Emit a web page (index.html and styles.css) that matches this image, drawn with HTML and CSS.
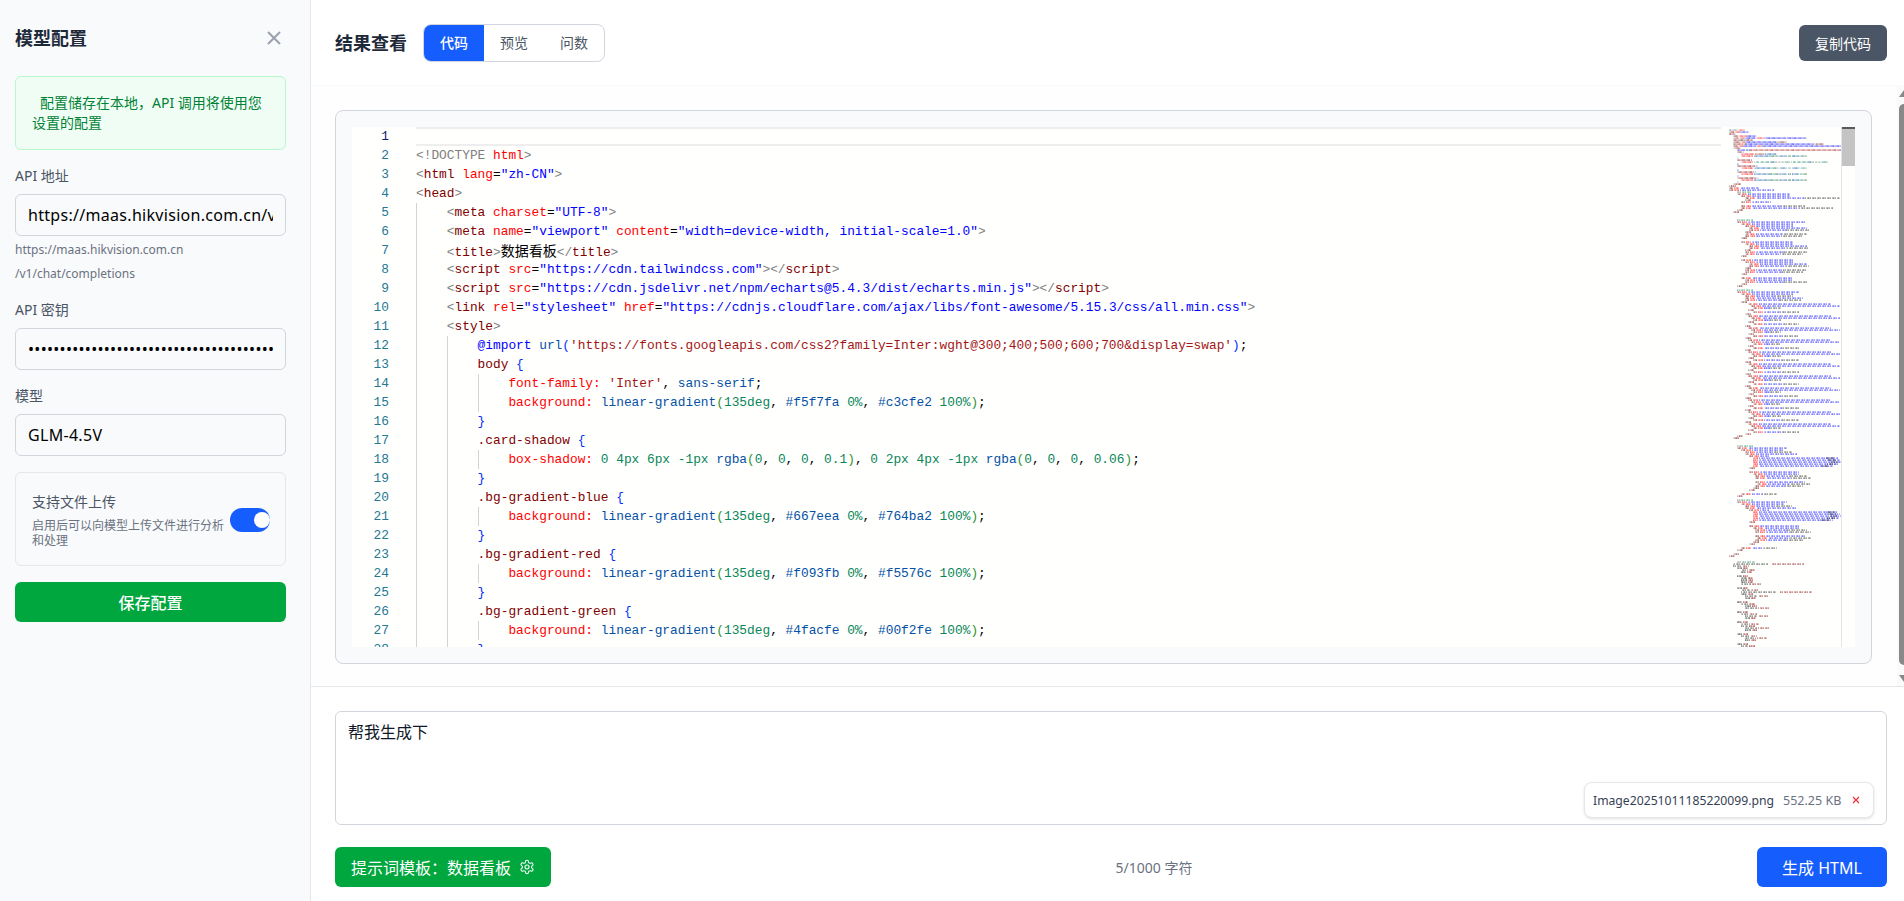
FILE: index.html
```html
<!DOCTYPE html>
<html lang="zh-CN">

<head>
    <meta charset="UTF-8">
    <meta name="viewport" content="width=device-width, initial-scale=1.0">
    <title>模型配置</title>
    <link rel="stylesheet" href="styles.css">
</head>

<body>
    <aside class="sidebar">
        <div class="sidebarHead">
            <h2 class="sidebarTitle">模型配置</h2>
            <svg class="closeIcon" viewBox="0 0 14 14" fill="none" stroke="#99a1af" stroke-width="2">
                <path d="M1 1l12 12M13 1L1 13" />
            </svg>
        </div>

        <div class="notice">配置储存在本地，API 调用将使用您设置的配置</div>

        <label class="fieldLabel">API 地址</label>
        <input class="field" type="text" value="https://maas.hikvision.com.cn/v1/chat/completions">
        <p class="hint">https://maas.hikvision.com.cn<br>/v1/chat/completions</p>

        <label class="fieldLabel fieldLabelTight">API 密钥</label>
        <input class="field" type="password" value="abcdefghijklmnopqrstuvwxyz0123456789abcd">

        <label class="fieldLabel">模型</label>
        <input class="field" type="text" value="GLM-4.5V">

        <div class="uploadCard">
            <div class="uploadText">
                <div class="uploadTitle">支持文件上传</div>
                <div class="uploadDesc">启用后可以向模型上传文件进行分析和处理</div>
            </div>
            <div class="toggle"><span class="knob"></span></div>
        </div>

        <button class="saveBtn">保存配置</button>
    </aside>

    <main class="main">
        <header class="mainHead">
            <h2 class="mainTitle">结果查看</h2>
            <div class="tabs">
                <span class="tab tabActive">代码</span>
                <span class="tab">预览</span>
                <span class="tab">问数</span>
            </div>
            <button class="copyBtn">复制代码</button>
        </header>

        <section class="result">
            <div class="codeCard">
                <div class="editor">
                    <div class="gutter">
                        <div class="num numActive">1</div>
                        <div class="num">2</div>
                        <div class="num">3</div>
                        <div class="num">4</div>
                        <div class="num">5</div>
                        <div class="num">6</div>
                        <div class="num">7</div>
                        <div class="num">8</div>
                        <div class="num">9</div>
                        <div class="num">10</div>
                        <div class="num">11</div>
                        <div class="num">12</div>
                        <div class="num">13</div>
                        <div class="num">14</div>
                        <div class="num">15</div>
                        <div class="num">16</div>
                        <div class="num">17</div>
                        <div class="num">18</div>
                        <div class="num">19</div>
                        <div class="num">20</div>
                        <div class="num">21</div>
                        <div class="num">22</div>
                        <div class="num">23</div>
                        <div class="num">24</div>
                        <div class="num">25</div>
                        <div class="num">26</div>
                        <div class="num">27</div>
                        <div class="num">28</div>
                    </div>
                    <div class="code">
                        <div class="currentLine"></div>
                        <i class="guide guideA"></i>
                        <i class="guide guideB"></i>
                        <i class="guide guideC c14"></i>
                        <i class="guide guideC c18"></i>
                        <i class="guide guideC c21"></i>
                        <i class="guide guideC c24"></i>
                        <i class="guide guideC c27"></i>
                        <div class="ln"></div>
                        <div class="ln"><span class="d">&lt;!DOCTYPE</span> <span class="a">html</span><span class="d">&gt;</span></div>
                        <div class="ln"><span class="d">&lt;</span><span class="t">html</span> <span class="a">lang</span>=<span class="v">"zh-CN"</span><span class="d">&gt;</span></div>
                        <div class="ln"><span class="d">&lt;</span><span class="t">head</span><span class="d">&gt;</span></div>
                        <div class="ln">    <span class="d">&lt;</span><span class="t">meta</span> <span class="a">charset</span>=<span class="v">"UTF-8"</span><span class="d">&gt;</span></div>
                        <div class="ln">    <span class="d">&lt;</span><span class="t">meta</span> <span class="a">name</span>=<span class="v">"viewport"</span> <span class="a">content</span>=<span class="v">"width=device-width, initial-scale=1.0"</span><span class="d">&gt;</span></div>
                        <div class="ln">    <span class="d">&lt;</span><span class="t">title</span><span class="d">&gt;</span><span class="zh">数据看板</span><span class="d">&lt;/</span><span class="t">title</span><span class="d">&gt;</span></div>
                        <div class="ln">    <span class="d">&lt;</span><span class="t">script</span> <span class="a">src</span>=<span class="v">"https://cdn.tailwindcss.com"</span><span class="d">&gt;&lt;/</span><span class="t">script</span><span class="d">&gt;</span></div>
                        <div class="ln">    <span class="d">&lt;</span><span class="t">script</span> <span class="a">src</span>=<span class="v">"https://cdn.jsdelivr.net/npm/echarts@5.4.3/dist/echarts.min.js"</span><span class="d">&gt;&lt;/</span><span class="t">script</span><span class="d">&gt;</span></div>
                        <div class="ln">    <span class="d">&lt;</span><span class="t">link</span> <span class="a">rel</span>=<span class="v">"stylesheet"</span> <span class="a">href</span>=<span class="v">"https://cdnjs.cloudflare.com/ajax/libs/font-awesome/5.15.3/css/all.min.css"</span><span class="d">&gt;</span></div>
                        <div class="ln">    <span class="d">&lt;</span><span class="t">style</span><span class="d">&gt;</span></div>
                        <div class="ln">        <span class="v">@import</span> <span class="c">url</span><span class="b1">(</span><span class="s">'https://fonts.googleapis.com/css2?family=Inter:wght@300;400;500;600;700&amp;display=swap'</span><span class="b1">)</span>;</div>
                        <div class="ln">        <span class="t">body</span> <span class="b1">{</span></div>
                        <div class="ln">            <span class="a">font-family:</span> <span class="s">'Inter'</span>, <span class="c">sans-serif</span>;</div>
                        <div class="ln">            <span class="a">background:</span> <span class="c">linear-gradient</span><span class="b2">(</span><span class="n">135deg</span>, <span class="c">#f5f7fa</span> <span class="n">0%</span>, <span class="c">#c3cfe2</span> <span class="n">100%</span><span class="b2">)</span>;</div>
                        <div class="ln">        <span class="b1">}</span></div>
                        <div class="ln">        <span class="t">.card-shadow</span> <span class="b1">{</span></div>
                        <div class="ln">            <span class="a">box-shadow:</span> <span class="n">0 4px 6px -1px</span> <span class="c">rgba</span><span class="b2">(</span><span class="n">0</span>, <span class="n">0</span>, <span class="n">0</span>, <span class="n">0.1</span><span class="b2">)</span>, <span class="n">0 2px 4px -1px</span> <span class="c">rgba</span><span class="b2">(</span><span class="n">0</span>, <span class="n">0</span>, <span class="n">0</span>, <span class="n">0.06</span><span class="b2">)</span>;</div>
                        <div class="ln">        <span class="b1">}</span></div>
                        <div class="ln">        <span class="t">.bg-gradient-blue</span> <span class="b1">{</span></div>
                        <div class="ln">            <span class="a">background:</span> <span class="c">linear-gradient</span><span class="b2">(</span><span class="n">135deg</span>, <span class="c">#667eea</span> <span class="n">0%</span>, <span class="c">#764ba2</span> <span class="n">100%</span><span class="b2">)</span>;</div>
                        <div class="ln">        <span class="b1">}</span></div>
                        <div class="ln">        <span class="t">.bg-gradient-red</span> <span class="b1">{</span></div>
                        <div class="ln">            <span class="a">background:</span> <span class="c">linear-gradient</span><span class="b2">(</span><span class="n">135deg</span>, <span class="c">#f093fb</span> <span class="n">0%</span>, <span class="c">#f5576c</span> <span class="n">100%</span><span class="b2">)</span>;</div>
                        <div class="ln">        <span class="b1">}</span></div>
                        <div class="ln">        <span class="t">.bg-gradient-green</span> <span class="b1">{</span></div>
                        <div class="ln">            <span class="a">background:</span> <span class="c">linear-gradient</span><span class="b2">(</span><span class="n">135deg</span>, <span class="c">#4facfe</span> <span class="n">0%</span>, <span class="c">#00f2fe</span> <span class="n">100%</span><span class="b2">)</span>;</div>
                        <div class="ln">        <span class="b1">}</span></div>
                    </div>
                    <canvas class="minimap" width="120" height="520"></canvas>
                    <div class="editorBar"><div class="editorThumb"></div></div>
                </div>
            </div>
            <div class="pageBar">
                <i class="pageArrow pageArrowUp"></i>
                <i class="pageThumb"></i>
                <i class="pageArrow pageArrowDown"></i>
            </div>
        </section>

        <section class="composer">
            <div class="promptWrap">
                <textarea class="prompt">帮我生成下</textarea>
                <div class="fileChip">
                    <span class="fileName">Image20251011185220099.png</span>
                    <span class="fileSize">552.25 KB</span>
                    <svg class="fileRemove" viewBox="0 0 8 8" fill="none" stroke="#fb2c36" stroke-width="1.2">
                        <path d="M1 1l6 6M7 1L1 7" />
                    </svg>
                </div>
            </div>
            <div class="actions">
                <button class="templateBtn">提示词模板：数据看板
                    <svg class="gear" viewBox="0 0 24 24" fill="none" stroke="#fff" stroke-width="1.6">
                        <path d="M12.22 2h-.44a2 2 0 0 0-2 2v.18a2 2 0 0 1-1 1.73l-.43.25a2 2 0 0 1-2 0l-.15-.08a2 2 0 0 0-2.73.73l-.22.38a2 2 0 0 0 .73 2.73l.15.1a2 2 0 0 1 1 1.72v.51a2 2 0 0 1-1 1.74l-.15.09a2 2 0 0 0-.73 2.73l.22.38a2 2 0 0 0 2.73.73l.15-.08a2 2 0 0 1 2 0l.43.25a2 2 0 0 1 1 1.73V20a2 2 0 0 0 2 2h.44a2 2 0 0 0 2-2v-.18a2 2 0 0 1 1-1.73l.43-.25a2 2 0 0 1 2 0l.15.08a2 2 0 0 0 2.73-.73l.22-.39a2 2 0 0 0-.73-2.73l-.15-.08a2 2 0 0 1-1-1.74v-.5a2 2 0 0 1 1-1.74l.15-.09a2 2 0 0 0 .73-2.73l-.22-.38a2 2 0 0 0-2.73-.73l-.15.08a2 2 0 0 1-2 0l-.43-.25a2 2 0 0 1-1-1.73V4a2 2 0 0 0-2-2z" />
                        <circle cx="12" cy="12" r="3" />
                    </svg>
                </button>
                <span class="counter">5/1000 字符</span>
                <button class="generateBtn">生成 HTML</button>
            </div>
        </section>
    </main>
    <script src="minimap.js"></script>
</body>

</html>
```
FILE: styles.css
```css
* {
    box-sizing: border-box;
}

body {
    margin: 0;
    height: 100vh;
    display: flex;
    overflow: hidden;
    background: #fff;
    color: #101828;
    font-family: "Noto Sans", "Noto Sans CJK SC", sans-serif;
}

button {
    font-family: inherit;
    border: 0;
    color: #fff;
}

/* Sidebar */
.sidebar {
    width: 311px;
    flex: none;
    padding: 26px 24px 0 15px;
    background: #f9fafb;
    border-right: 1px solid #e5e7eb;
}

.sidebarHead {
    display: flex;
    align-items: center;
    justify-content: space-between;
    height: 24px;
    margin-bottom: 26px;
    padding-right: 5px;
}

.sidebarTitle,
.mainTitle {
    margin: 0;
    font-size: 18px;
    line-height: 24px;
    font-weight: 700;
    color: #1e2939;
}

.closeIcon {
    width: 14px;
    height: 14px;
}

.notice {
    padding: 16px;
    background: #f0fdf4;
    border: 1px solid #b9f8cf;
    border-radius: 6px;
    color: #008236;
    font-size: 14px;
    line-height: 20px;
    text-indent: 8px;
}

.fieldLabel {
    display: block;
    margin: 16px 0 8px;
    color: #4a5565;
    font-size: 14px;
    line-height: 20px;
}

.fieldLabelTight {
    margin-top: 14px;
}

.field {
    display: block;
    width: 100%;
    height: 42px;
    padding: 0 12px;
    background: #f9fafb;
    border: 1px solid #d1d5dc;
    border-radius: 6px;
    color: #000;
    font-family: inherit;
    font-size: 16px;
    letter-spacing: 0.3px;
}

.hint {
    margin: 2px 0 0;
    color: #6a7282;
    font-size: 12px;
    line-height: 24px;
}

.uploadCard {
    display: flex;
    justify-content: space-between;
    align-items: center;
    height: 94px;
    margin-top: 16px;
    padding: 2px 15px 0 16px;
    border: 1px solid #e5e7eb;
    border-radius: 6px;
}

.uploadText {
    width: 195px;
}

.uploadTitle {
    color: #4a5565;
    font-size: 14px;
    line-height: 20px;
}

.uploadDesc {
    margin-top: 6px;
    color: #6a7282;
    font-size: 12px;
    line-height: 15px;
}

.toggle {
    position: relative;
    width: 40px;
    height: 24px;
    background: #155dfc;
    border-radius: 12px;
}

.knob {
    position: absolute;
    top: 4px;
    right: 0;
    width: 16px;
    height: 16px;
    background: #fff;
    border-radius: 50%;
}

.saveBtn {
    display: block;
    width: 100%;
    height: 40px;
    margin-top: 16px;
    background: #00a63e;
    border-radius: 6px;
    font-size: 16px;
    font-weight: 500;
}

/* Main column */
.main {
    flex: 1;
    min-width: 0;
    display: flex;
    flex-direction: column;
}

.mainHead {
    display: flex;
    align-items: center;
    height: 86px;
    padding: 0 17px 0 24px;
    border-bottom: 1px solid #f9fafb;
}

.tabs {
    display: flex;
    margin-left: 16px;
    height: 38px;
    border: 1px solid #d1d5dc;
    border-radius: 8px;
    overflow: hidden;
}

.tab {
    width: 60px;
    color: #4a5565;
    font-size: 14px;
    line-height: 36px;
    text-align: center;
}

.tabActive {
    background: #155dfc;
    color: #fff;
    font-weight: 500;
}

.copyBtn {
    margin-left: auto;
    width: 88px;
    height: 36px;
    background: #4a5565;
    border-radius: 6px;
    font-size: 14px;
}

.result {
    position: relative;
    height: 601px;
    padding: 24px 32px 0 24px;
    border-bottom: 1px solid #e5e7eb;
    background: #fefefe;
    overflow: hidden;
}

.codeCard {
    height: 554px;
    padding: 16px;
    background: #f9fafb;
    border: 1px solid #d1d5dc;
    border-radius: 8px;
}

.editor {
    display: flex;
    height: 520px;
    background: #fffffe;
    overflow: hidden;
    font-family: "Liberation Mono", monospace;
    font-size: 12.83px;
    line-height: 19px;
    color: #000;
}

.gutter {
    width: 64px;
    flex: none;
    padding-right: 27px;
    text-align: right;
    color: #237893;
}

.numActive {
    color: #0b216f;
}

.code {
    position: relative;
    flex: 1;
    min-width: 0;
}

.currentLine {
    position: absolute;
    top: 0;
    left: 0;
    right: 0;
    height: 19px;
    border-top: 2px solid #eeeeee;
    border-bottom: 2px solid #eeeeee;
}

.ln {
    height: 19px;
    white-space: pre;
}

.d { color: #808080; }
.t { color: #800000; }
.a { color: #ff0000; }
.v { color: #0000ff; }
.c { color: #0451a5; }
.n { color: #098658; }
.s { color: #a31515; }
.b1 { color: #0431fa; }
.b2 { color: #319331; }

.zh {
    font-family: "Noto Sans CJK SC", sans-serif;
    font-size: 14px;
}

.guide {
    position: absolute;
    width: 1px;
    background: #d3d3d3;
}

.guideA {
    left: 0;
    top: 76px;
    bottom: 0;
}

.guideB {
    left: 31px;
    top: 209px;
    bottom: 0;
}

.guideC {
    left: 62px;
    height: 19px;
}

.c14 { top: 247px; height: 38px; }
.c18 { top: 323px; }
.c21 { top: 380px; }
.c24 { top: 437px; }
.c27 { top: 494px; }

.minimap {
    width: 120px;
    height: 520px;
    flex: none;
}

.editorBar {
    width: 14px;
    flex: none;
    border-left: 1px solid #e5e5e5;
}

.editorThumb {
    height: 39px;
    background: #c4c4c4;
    border-top: 2px solid #5a5a5a;
}

/* Page scrollbar, it sits over the right edge of the result area */
.pageBar {
    position: absolute;
    top: 0;
    right: 0;
    bottom: 0;
    width: 7px;
    background: #fafafa;
    overflow: hidden;
}

.pageThumb {
    position: absolute;
    left: 2px;
    top: 18px;
    width: 10px;
    height: 561px;
    background: #888;
    border-radius: 5px;
}

.pageArrow {
    position: absolute;
    left: 2px;
    width: 5px;
    height: 7px;
    background: #888;
}

.pageArrowUp {
    top: 4px;
    clip-path: polygon(0 100%, 100% 0, 100% 100%);
}

.pageArrowDown {
    top: 589px;
    clip-path: polygon(0 0, 100% 0, 100% 100%);
}

/* Prompt area */
.composer {
    flex: 1;
    padding: 24px 17px 14px 24px;
}

.promptWrap {
    position: relative;
    height: 114px;
}

.prompt {
    display: block;
    width: 100%;
    height: 100%;
    padding: 8px 12px;
    border: 1px solid #d1d5dc;
    border-radius: 6px;
    resize: none;
    color: #101828;
    font-family: inherit;
    font-size: 16px;
    line-height: 24px;
    background: #fff;
}

.fileChip {
    position: absolute;
    right: 13px;
    bottom: 7px;
    display: flex;
    align-items: center;
    width: 290px;
    height: 36px;
    padding: 0 13px 0 8px;
    background: #fff;
    border: 1px solid #e5e7eb;
    border-radius: 8px;
    box-shadow: 0 1px 3px rgba(0, 0, 0, 0.12);
    font-size: 12.5px;
}

.fileName {
    color: #364153;
    font-size: 12.2px;
}

.fileSize {
    margin-left: 9px;
    color: #6a7282;
}

.fileRemove {
    width: 8px;
    height: 8px;
    margin-left: auto;
}

.actions {
    display: flex;
    align-items: center;
    justify-content: space-between;
    margin-top: 22px;
}

.templateBtn {
    display: flex;
    align-items: center;
    gap: 8px;
    height: 40px;
    padding: 0 16px;
    background: #00a63e;
    border-radius: 6px;
    font-size: 16px;
}

.gear {
    width: 16px;
    height: 16px;
}

.counter {
    color: #6a7282;
    font-size: 14px;
}

.generateBtn {
    width: 130px;
    height: 40px;
    background: #155dfc;
    border-radius: 6px;
    font-size: 16px;
}
```
FILE: minimap.js
```js
// Small overview of the source beside the editor
const canvas = document.querySelector('.minimap');
const ctx = canvas.getContext('2d');

const colors = {
    g: '128,128,128',
    m: '128,0,0',
    r: '255,0,0',
    b: '0,0,255',
    k: '30,30,30',
    n: '9,134,88'
};

const startX = 8;
const rows = [];

const drawChars = function (x, row, len, color, seed) {
    for (let i = 0; i < len; i++) {
        const h = (i * 7 + row * 13 + seed) % 5;
        if (h === 4 && len > 6) continue;
        ctx.fillStyle = `rgba(${color},${0.3 + h * 0.1})`;
        ctx.fillRect(x + i, row * 2 + 0.4, 1, 1.4);
    }
};

// lines that are really in the editor
document.querySelectorAll('.ln').forEach(function (line, row) {
    let x = startX;
    line.childNodes.forEach(function (node) {
        const text = node.textContent;
        const color = node.nodeType === 1
            ? getComputedStyle(node).color.replace(/rgba?\(|\)/g, '')
            : '60,60,60';
        [...text].forEach(function (ch, i) {
            if (ch !== ' ') drawChars(x, row, 1, color, i);
            x += 1.05;
        });
    });
});

// the rest of the file, [indent, length, kind]
const open = (i, w) => rows.push([i, w, 'o']);
const close = (i, w) => rows.push([i, w || 6, 'c']);
const text = (i, w) => rows.push([i, w, 't']);
const note = (i, w) => rows.push([i, w, 'l']);
const dense = (i, w) => rows.push([i, w, 'd']);
const js = (i, w) => rows.push([i, w, 'j']);
const gap = () => rows.push(null);

const statCard = function () {
    open(12, 52);
    open(16, 48);
    open(20, 58);
    text(20, 60);
    close(16);
    text(16, 62);
    text(16, 58);
    close(12);
    gap();
};

const listRow = function () {
    open(19, 83);
    open(22, 89);
    text(24, 28);
    close(19);
    text(24, 46);
    close(16);
};

const chart = function () {
    note(8, 16);
    open(8, 50);
    open(12, 43);
    text(16, 47);
    open(16, 52);
    open(20, 20);
    dense(24, 85);
    dense(24, 87);
    dense(24, 89);
    dense(24, 86);
    dense(24, 80);
    close(20);
    gap();
    open(20, 50);
    open(24, 46);
    text(26, 52);
    text(26, 56);
    gap();
    open(26, 50);
    text(28, 54);
    text(26, 48);
    close(24);
    close(20);
    gap();
    text(12, 36);
    close(8);
    gap();
};

close(4, 8);
close(0, 7);
open(0, 30);
open(0, 45);
note(8, 14);
open(8, 53);
open(12, 49);
text(16, 95);
close(16);
open(12, 30);
gap();
text(12, 64);
text(12, 92);
close(8);
close(4);
gap();
gap();
gap();
note(8, 16);
open(8, 68);
for (let i = 0; i < 3; i++) statCard();
open(12, 52);
open(16, 48);
text(16, 62);
close(12);
close(8);
gap();
note(8, 16);
open(8, 62);
open(12, 52);
text(16, 48);
open(16, 58);
text(16, 56);
close(12);
for (let i = 0; i < 11; i++) listRow();
close(8);
close(4);
gap();
gap();
gap();
chart();
chart();
close(4);
close(0, 6);
gap();
gap();
note(8, 18);
js(4, 70);
js(4, 16);
js(8, 10);
js(12, 14);
js(12, 10);
gap();
js(8, 10);
js(12, 12);
js(12, 12);
js(12, 12);
js(12, 20);
gap();
js(8, 10);
js(12, 18);
js(12, 70);
js(12, 12);
js(16, 24);
js(16, 10);
gap();
js(8, 10);
js(12, 14);
js(16, 12);
js(16, 24);
gap();
js(8, 10);
js(12, 16);
js(16, 24);
js(16, 10);
gap();
js(8, 10);
js(12, 18);
js(12, 14);
js(16, 24);
js(16, 12);
gap();
js(8, 10);
js(12, 16);
js(16, 22);
js(16, 10);
gap();
js(8, 10);
js(12, 14);
js(12, 18);
js(16, 20);

rows.forEach(function (r, idx) {
    if (!r) return;
    const row = 28 + idx;
    const x = startX + r[0];
    const w = r[1];
    if (r[2] === 'c') {
        drawChars(x, row, 2, colors.g, 1);
        drawChars(x + 2, row, w - 2, colors.m, 2);
    } else if (r[2] === 'l') {
        drawChars(x, row, 4, colors.g, 1);
        drawChars(x + 4, row, w - 4, colors.n, 3);
    } else if (r[2] === 'o' || r[2] === 't') {
        const end = r[2] === 't' ? Math.round(w * 0.62) : w;
        drawChars(x, row, 1, colors.g, 1);
        drawChars(x + 1, row, 3, colors.m, 2);
        drawChars(x + 5, row, 5, colors.r, 3);
        drawChars(x + 11, row, end - 11, colors.b, 4);
        if (r[2] === 't') drawChars(x + end, row, w - end, colors.k, 5);
    } else if (r[2] === 'd') {
        drawChars(x, row, 5, colors.r, 1);
        drawChars(x + 6, row, w - 6, colors.b, 2);
        drawChars(x + w - 12, row, 8, colors.k, 3);
    } else {
        drawChars(x, row, Math.round(w * 0.5), colors.k, 1);
        drawChars(x + Math.round(w * 0.55), row, Math.round(w * 0.45), colors.m, 2);
    }
});
```
